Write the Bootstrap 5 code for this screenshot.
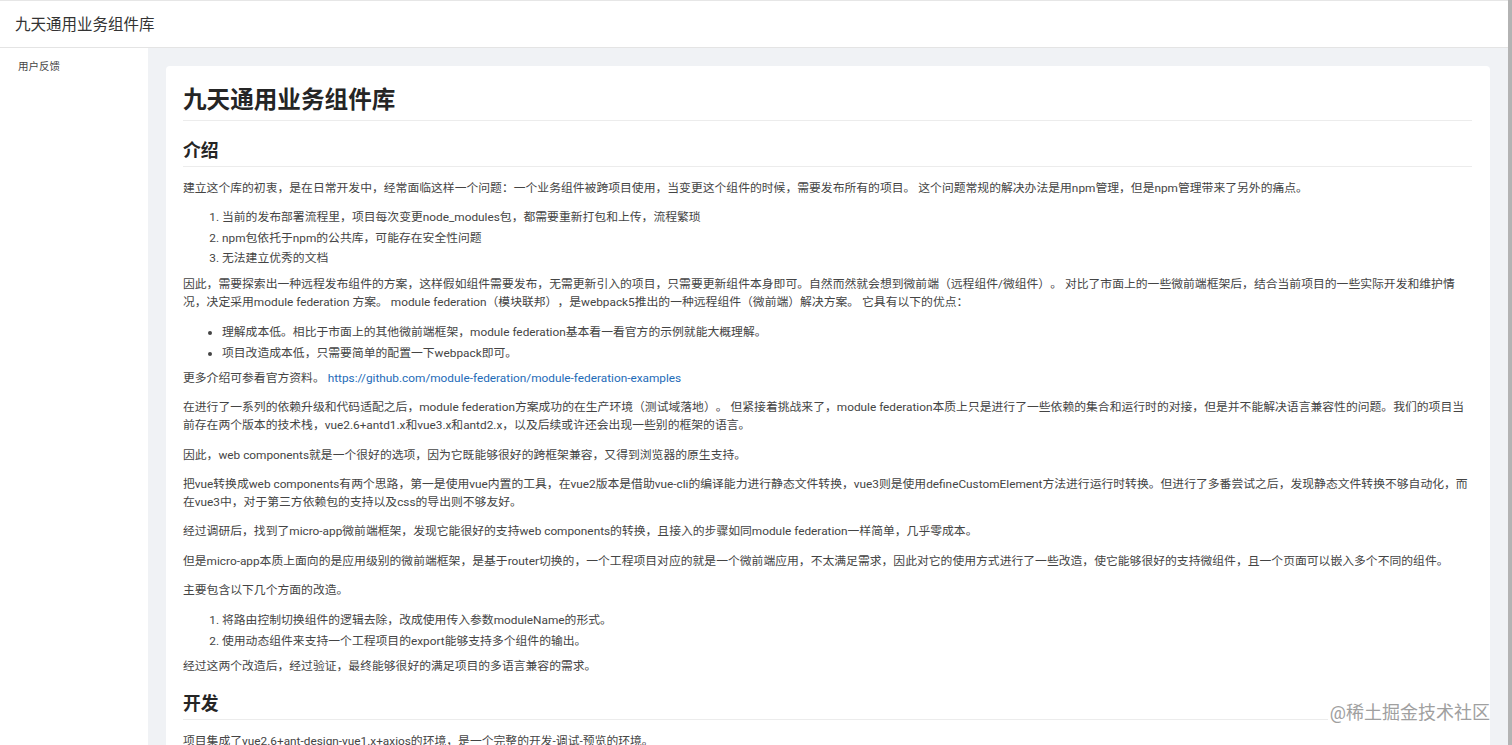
<!DOCTYPE html>
<html lang="zh-CN">
<head>
<meta charset="utf-8">
<title>九天通用业务组件库</title>
<link href="https://cdn.jsdelivr.net/npm/bootstrap@5.3.0/dist/css/bootstrap.min.css" rel="stylesheet">
<style>
html,body{height:745px;overflow:hidden;}
body{font-family:Roboto,"Noto Sans CJK SC",sans-serif;font-size:11.82px;color:#444;background:#f0f2f5;text-spacing-trim:space-all;}
.app-shell{height:745px;padding-right:4px;background:#b3b3b3;position:relative;}
.app-inner{height:745px;background:#f0f2f5;display:flex;flex-direction:column;overflow:hidden;}
.top-bar{height:48px;flex:none;background:#fff;border-top:1px solid #e6e6e6;border-bottom:1px solid #e4e4e4;padding:4px 15px 0;font-size:15.5px;color:#333;}
.side-nav{width:147.5px;flex:none;background:#fff;padding:10px 18px;font-size:10.5px;line-height:18px;color:#444;}
.main-pane{flex:1;min-width:0;padding:18px 18px 0;overflow:hidden;}
.doc-sheet{background:#fff;border-radius:4px;padding:17px 18px 0 17.5px;height:700px;overflow:hidden;}
.doc-sheet h1{font-size:23.6px;font-weight:700;color:#252525;line-height:34px;margin:0 0 17px;padding-bottom:3px;border-bottom:1px solid #ececec;}
.doc-sheet h2{font-size:17.8px;font-weight:700;color:#252525;line-height:26px;margin:0 0 12px;padding-bottom:2px;border-bottom:1px solid #ececec;}
.doc-sheet p{line-height:18px;margin:0 0 11.35px;}
.doc-sheet ol,.doc-sheet ul{margin:0 0 5.9px;padding-left:39px;}
.doc-sheet ol:first-of-type{margin-top:-1px;}
.doc-sheet li{line-height:20.5px;}
.doc-sheet a{color:#1e6bb8;text-decoration:none;}
.h2-late{margin-top:16px!important;}
.mark-stamp{position:absolute;right:22px;top:702px;background:#fff;color:#a0a0a0;font-size:18px;line-height:22px;padding-left:2px;}
</style>
</head>
<body>
<div class="app-shell">
  <div class="app-inner">
    <header class="top-bar d-flex align-items-center">九天通用业务组件库</header>
    <div class="d-flex flex-grow-1" style="min-height:0">
      <nav class="side-nav">用户反馈</nav>
      <main class="main-pane">
        <article class="doc-sheet">
          <h1>九天通用业务组件库</h1>
          <h2>介绍</h2>
          <p>建立这个库的初衷，是在日常开发中，经常面临这样一个问题：一个业务组件被跨项目使用，当变更这个组件的时候，需要发布所有的项目。 这个问题常规的解决办法是用npm管理，但是npm管理带来了另外的痛点。</p>
          <ol>
            <li>当前的发布部署流程里，项目每次变更node_modules包，都需要重新打包和上传，流程繁琐</li>
            <li>npm包依托于npm的公共库，可能存在安全性问题</li>
            <li>无法建立优秀的文档</li>
          </ol>
          <p>因此，需要探索出一种远程发布组件的方案，这样假如组件需要发布，无需更新引入的项目，只需要更新组件本身即可。自然而然就会想到微前端（远程组件/微组件）。 对比了市面上的一些微前端框架后，结合当前项目的一些实际开发和维护情况，决定采用module federation 方案。 module federation（模块联邦），是webpack5推出的一种远程组件（微前端）解决方案。 它具有以下的优点：</p>
          <ul>
            <li>理解成本低。相比于市面上的其他微前端框架，module federation基本看一看官方的示例就能大概理解。</li>
            <li>项目改造成本低，只需要简单的配置一下webpack即可。</li>
          </ul>
          <p>更多介绍可参看官方资料。 <a href="#">https://github.com/module-federation/module-federation-examples</a></p>
          <p>在进行了一系列的依赖升级和代码适配之后，module federation方案成功的在生产环境（测试域落地）。 但紧接着挑战来了，module federation本质上只是进行了一些依赖的集合和运行时的对接，但是并不能解决语言兼容性的问题。我们的项目当前存在两个版本的技术栈，vue2.6+antd1.x和vue3.x和antd2.x，以及后续或许还会出现一些别的框架的语言。</p>
          <p>因此，web components就是一个很好的选项，因为它既能够很好的跨框架兼容，又得到浏览器的原生支持。</p>
          <p>把vue转换成web components有两个思路，第一是使用vue内置的工具，在vue2版本是借助vue-cli的编译能力进行静态文件转换，vue3则是使用defineCustomElement方法进行运行时转换。但进行了多番尝试之后，发现静态文件转换不够自动化，而在vue3中，对于第三方依赖包的支持以及css的导出则不够友好。</p>
          <p>经过调研后，找到了micro-app微前端框架，发现它能很好的支持web components的转换，且接入的步骤如同module federation一样简单，几乎零成本。</p>
          <p>但是micro-app本质上面向的是应用级别的微前端框架，是基于router切换的，一个工程项目对应的就是一个微前端应用，不太满足需求，因此对它的使用方式进行了一些改造，使它能够很好的支持微组件，且一个页面可以嵌入多个不同的组件。</p>
          <p>主要包含以下几个方面的改造。</p>
          <ol>
            <li>将路由控制切换组件的逻辑去除，改成使用传入参数moduleName的形式。</li>
            <li>使用动态组件来支持一个工程项目的export能够支持多个组件的输出。</li>
          </ol>
          <p>经过这两个改造后，经过验证，最终能够很好的满足项目的多语言兼容的需求。</p>
          <h2 class="h2-late">开发</h2>
          <p>项目集成了vue2.6+ant-design-vue1.x+axios的环境，是一个完整的开发-调试-预览的环境。</p>
        </article>
      </main>
    </div>
  </div>
  <div class="mark-stamp">@稀土掘金技术社区</div>
</div>
<script src="https://cdn.jsdelivr.net/npm/bootstrap@5.3.0/dist/js/bootstrap.bundle.min.js"></script>
</body>
</html>
